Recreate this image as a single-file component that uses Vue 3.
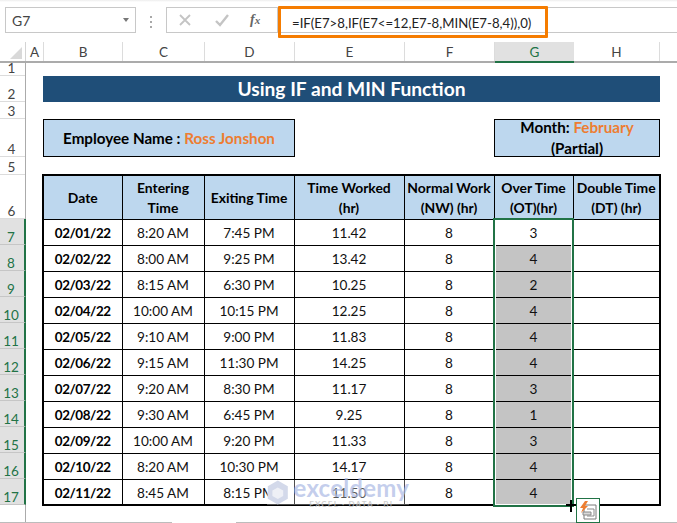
<script setup>
const columns = [
  { name: 'A', width: 18 },
  { name: 'B', width: 79 },
  { name: 'C', width: 82 },
  { name: 'D', width: 90 },
  { name: 'E', width: 110 },
  { name: 'F', width: 90 },
  { name: 'G', width: 79, active: true },
  { name: 'H', width: 86 }
]
const rowHeads = [
  { n: 1, h: 14 }, { n: 2, h: 26 }, { n: 3, h: 17 }, { n: 4, h: 38 }, { n: 5, h: 18 }, { n: 6, h: 44 },
  ...[7, 8, 9, 10, 11, 12, 13, 14, 15, 16, 17].map((n) => ({ n, h: 26, active: true }))
]
const formula = '=IF(E7>8,IF(E7<=12,E7-8,MIN(E7-8,4)),0)'
const rows = [
  ['02/01/22', '8:20 AM', '7:45 PM', '11.42', 3],
  ['02/02/22', '8:00 AM', '9:25 PM', '13.42', 4],
  ['02/03/22', '8:15 AM', '6:30 PM', '10.25', 2],
  ['02/04/22', '10:00 AM', '10:15 PM', '12.25', 4],
  ['02/05/22', '9:10 AM', '9:00 PM', '11.83', 4],
  ['02/06/22', '9:15 AM', '11:30 PM', '14.25', 4],
  ['02/07/22', '9:20 AM', '8:30 PM', '11.17', 3],
  ['02/08/22', '9:30 AM', '6:45 PM', '9.25', 1],
  ['02/09/22', '10:00 AM', '9:20 PM', '11.33', 3],
  ['02/10/22', '8:20 AM', '10:30 PM', '14.17', 4],
  ['02/11/22', '8:45 AM', '8:15 PM', '11.50', 4]
]
</script>

<template>
  <div class="app">
    <div class="formula-bar">
      <div class="name-box">
        <span>G7</span>
        <i class="caret"></i>
      </div>
      <div class="grip"><i></i><i></i><i></i></div>
      <div class="fx-box">
        <svg width="14" height="14" viewBox="0 0 14 14" class="ico"><path d="M2 2l10 10M12 2L2 12" stroke="#c4c4c4" stroke-width="1.8" fill="none"/></svg>
        <svg width="16" height="14" viewBox="0 0 16 14" class="ico"><path d="M2 8l4 4 8-10" stroke="#c4c4c4" stroke-width="2.4" fill="none"/></svg>
        <span class="fx">f<small>x</small></span>
      </div>
      <div class="formula-input">
        <span class="formula-text">{{ formula }}</span>
      </div>
    </div>

    <div class="col-heads">
      <div class="corner"><i></i></div>
      <div
        v-for="c in columns"
        :key="c.name"
        class="col-head"
        :class="{ active: c.active }"
        :style="{ width: c.width + 'px' }"
      >{{ c.name }}</div>
      <div class="col-rest"></div>
    </div>

    <div class="body">
      <div class="row-heads">
        <div
          v-for="r in rowHeads"
          :key="r.n"
          class="row-head"
          :class="{ active: r.active }"
          :style="{ height: r.h + 'px' }"
        >{{ r.n }}</div>
      </div>

      <div class="canvas">
        <h1 class="banner">Using IF and MIN Function</h1>
        <div class="info">
          <div class="info-box employee">Employee Name : <em>Ross Jonshon</em></div>
          <div class="info-box month"><div>Month: <em>February</em><br />(Partial)</div></div>
        </div>

        <div class="table-wrap">
          <table>
            <colgroup>
              <col class="c-b" /><col class="c-c" /><col class="c-d" /><col class="c-e" /><col class="c-f" /><col class="c-g" /><col class="c-h" />
            </colgroup>
            <thead>
              <tr>
                <th>Date</th>
                <th>Entering<br />Time</th>
                <th>Exiting Time</th>
                <th>Time Worked<br />(hr)</th>
                <th>Normal Work<br />(NW) (hr)</th>
                <th>Over Time<br />(OT)(hr)</th>
                <th>Double Time<br />(DT) (hr)</th>
              </tr>
            </thead>
            <tbody>
              <tr v-for="(r, i) in rows" :key="r[0]">
                <td class="date">{{ r[0] }}</td>
                <td>{{ r[1] }}</td>
                <td>{{ r[2] }}</td>
                <td>{{ r[3] }}</td>
                <td>8</td>
                <td :class="{ grey: i > 0 }">{{ r[4] }}</td>
                <td></td>
              </tr>
            </tbody>
          </table>
          <div class="selection"></div>
          <div class="watermark">
            <svg class="wm-logo" width="28" height="31" viewBox="0 0 28 31">
              <path d="M14 0l13 7.500v16L14 31 1 23.500v-16z" fill="#d3d9ea"/>
              <path d="M14 9l7 4v7l-7 4-7-4v-7z" fill="#eef0f6"/>
            </svg>
            <div class="wm-text">
              <span class="wm-name">exceldemy</span>
              <span class="wm-sub">EXCEL · DATA · BI</span>
            </div>
          </div>
        </div>
      </div>
    </div>

    <div class="bottom-line left"></div>
    <div class="bottom-line right"></div>

    <div class="cursor"><i></i><i></i></div>
    <div class="paste-opt">
      <svg width="21" height="21" viewBox="0 0 21 21">
        <path d="M6 5h12v14H6z" fill="#fff" stroke="#7a7a7a"/>
        <path d="M9 9h7M9 16h7M16 9v7" stroke="#8a8a8a" fill="none"/>
        <path d="M5 12h8v3H5z" fill="#d9d9d9" stroke="#8a8a8a"/>
        <path d="M7 1L2 8h3l-2 5 7-7H7l3-5z" fill="#ed7d31"/>
      </svg>
    </div>
  </div>
</template>

<style>
html, body { margin: 0; background: #fff; }
</style>

<style scoped>
.app {
  position: relative;
  width: 677px;
  height: 523px;
  overflow: hidden;
  background: #fff;
  font-family: Lato, "Liberation Sans", sans-serif;
  font-size: 13.6px;
  color: #111;
}

.formula-bar {
  display: flex;
  align-items: flex-start;
  height: 42px;
  padding: 7px 0 0 5px;
  box-sizing: border-box;
  background: linear-gradient(#ededed 0, #fff 2px);
}
.name-box {
  display: flex;
  align-items: center;
  justify-content: space-between;
  box-sizing: border-box;
  width: 131px;
  height: 26px;
  padding: 0 6px 0 6px;
  border: 1px solid #c8c8c8;
  color: #444;
  font-size: 14px;
}
.caret {
  width: 0;
  height: 0;
  border: 3.5px solid transparent;
  border-top: 4px solid #777;
  border-bottom: 0;
}
.grip {
  display: flex;
  flex-direction: column;
  gap: 3px;
  width: 2px;
  margin: 9px 14px 0 14px;
}
.grip i { width: 2px; height: 2px; background: #a8a8a8; }
.fx-box {
  display: flex;
  align-items: center;
  box-sizing: border-box;
  width: 111px;
  height: 26px;
  padding-left: 11px;
  border: 1px solid #c8c8c8;
  border-right: 0;
}
.ico:nth-child(2) { margin-left: 22px; }
.fx {
  margin-left: 20px;
  font-family: "Liberation Serif", serif;
  font-style: italic;
  font-weight: 700;
  font-size: 14px;
  color: #666;
}
.fx small { font-size: 11px; }
.formula-input {
  position: relative;
  flex: 1;
  height: 26px;
  box-sizing: border-box;
  border: 1px solid #c8c8c8;
  border-right: 0;
}
.formula-text {
  position: absolute;
  left: 0;
  top: -2px;
  box-sizing: border-box;
  width: 270px;
  height: 32px;
  padding: 5px 0 0 11px;
  border: 3px solid #f57c00;
  border-radius: 1px;
  font-size: 13.2px;
  line-height: 18px;
  color: #222;
  white-space: nowrap;
}

.col-heads {
  display: flex;
  height: 20px;
  box-shadow: 0 1px 0 #ababab;
  border-bottom: 1px solid #ababab;
  box-sizing: border-box;
  color: #444;
  font-size: 13.5px;
}
.corner {
  position: relative;
  width: 26px;
  box-sizing: border-box;
  border-right: 1px solid #d4d4d4;
}
.corner i {
  position: absolute;
  right: 3px;
  bottom: 2px;
  width: 0;
  height: 0;
  border-style: solid;
  border-width: 0 0 12px 12px;
  border-color: transparent transparent #d9d9d9 transparent;
}
.col-head {
  display: flex;
  align-items: center;
  justify-content: center;
  box-sizing: border-box;
  height: 19px;
  border-right: 1px solid #dcdcdc;
  flex: none;
}
.col-head.active {
  height: 21px;
  background: #e1e1e1;
  color: #217346;
  border-bottom: 2px solid #217346;
  border-right: 0;
}
.col-rest { flex: 1; }

.body { display: flex; height: 460px; }
.row-heads {
  flex: none;
  box-sizing: border-box;
  width: 26px;
  border-right: 1px solid #ababab;
  color: #444;
  font-size: 13.5px;
}
.row-head {
  display: flex;
  align-items: flex-end;
  justify-content: center;
  box-sizing: border-box;
  padding-right: 2px;
  line-height: 14px;
  border-bottom: 1px solid #dcdcdc;
}
.row-head.active {
  background: #e1e1e1;
  color: #217346;
  border-right: 2px solid #217346;
  width: 26px;
  border-bottom-color: #c6c6c6;
  margin-right: -1px;
}

.canvas { flex: 1; padding: 14px 0 0 17px; }
.banner {
  box-sizing: border-box;
  width: 617px;
  height: 26px;
  margin: 0;
  background: #1f4e78;
  color: #fff;
  font-size: 19.2px;
  font-weight: 700;
  line-height: 26px;
  text-align: center;
}
.info {
  display: flex;
  justify-content: space-between;
  width: 617px;
  margin-top: 17px;
}
.info-box {
  display: flex;
  align-items: center;
  justify-content: center;
  box-sizing: border-box;
  height: 38px;
  background: #bdd7ee;
  border: 1px solid #000;
  font-weight: 700;
  text-align: center;
  font-size: 15.2px;
  color: #000;
  white-space: pre-wrap;
}
.info-box em { font-style: normal; color: #ed7d31; }
.employee { width: 252px; }
.month { width: 166px; line-height: 21px; }

.table-wrap { position: relative; width: 620px; margin: 17px 0 0 -1px; }
table {
  border-collapse: collapse;
  table-layout: fixed;
  width: 617px;
  border: 2px solid #000;
}
.c-b { width: 79px; }
.c-c { width: 82px; }
.c-d { width: 90px; }
.c-e { width: 110px; }
.c-f { width: 90px; }
.c-g { width: 79px; }
.c-h { width: 87px; }
th, td {
  box-sizing: border-box;
  text-align: center;
  white-space: nowrap;
  border: 1px solid #000;
}
th {
  height: 44px;
  padding: 2px 0 0;
  background: #bdd7ee;
  font-weight: 700;
  line-height: 20px;
  font-size: 13.9px;
  color: #000;
}
td { height: 26px; padding: 2px 0 0; line-height: 20px; }
td.date { font-weight: 700; font-size: 13.4px; letter-spacing: -0.4px; color: #000; }
td.grey { background: #c4c4c4; }

.selection {
  position: absolute;
  left: 451px;
  top: 44px;
  box-sizing: border-box;
  width: 81px;
  height: 289px;
  border: 2px solid #217346;
  box-shadow: inset 1px 0 0 #fff, inset -1px -1px 0 #fff;
  pointer-events: none;
}

.watermark {
  position: absolute;
  left: 225px;
  top: 306px;
  display: flex;
  align-items: flex-start;
  gap: 5px;
  width: 142px;
  height: 25px;
  background: rgba(255, 255, 255, 0.3);
}
.wm-logo { margin-top: -3px; }
.wm-text { display: flex; flex-direction: column; margin-top: -4px; }
.wm-name {
  color: rgba(170, 184, 228, 0.7);
  font-size: 24px;
  font-weight: 700;
  line-height: 24px;
  letter-spacing: 0.2px;
}
.wm-sub {
  color: rgba(190, 190, 190, 0.75);
  font-size: 8px;
  font-weight: 700;
  letter-spacing: 1.2px;
  line-height: 9px;
  text-align: center;
}

.bottom-line {
  position: absolute;
  top: 522px;
  height: 1px;
  background: #bcbcbc;
}
.bottom-line.left { left: 0; width: 172px; }
.bottom-line.right { left: 236px; right: 0; }

.cursor { position: absolute; left: 566px; top: 500px; width: 11px; height: 12px; }
.cursor i { position: absolute; background: #000; }
.cursor i:first-child { left: 0; top: 4px; width: 11px; height: 2px; }
.cursor i:last-child { left: 4px; top: 0; width: 2px; height: 12px; }
.paste-opt {
  position: absolute;
  left: 576px;
  top: 498px;
  box-sizing: border-box;
  width: 24px;
  height: 25px;
  background: #fff;
  border: 1px solid #217346;
  display: flex;
  align-items: center;
  justify-content: center;
}
</style>
